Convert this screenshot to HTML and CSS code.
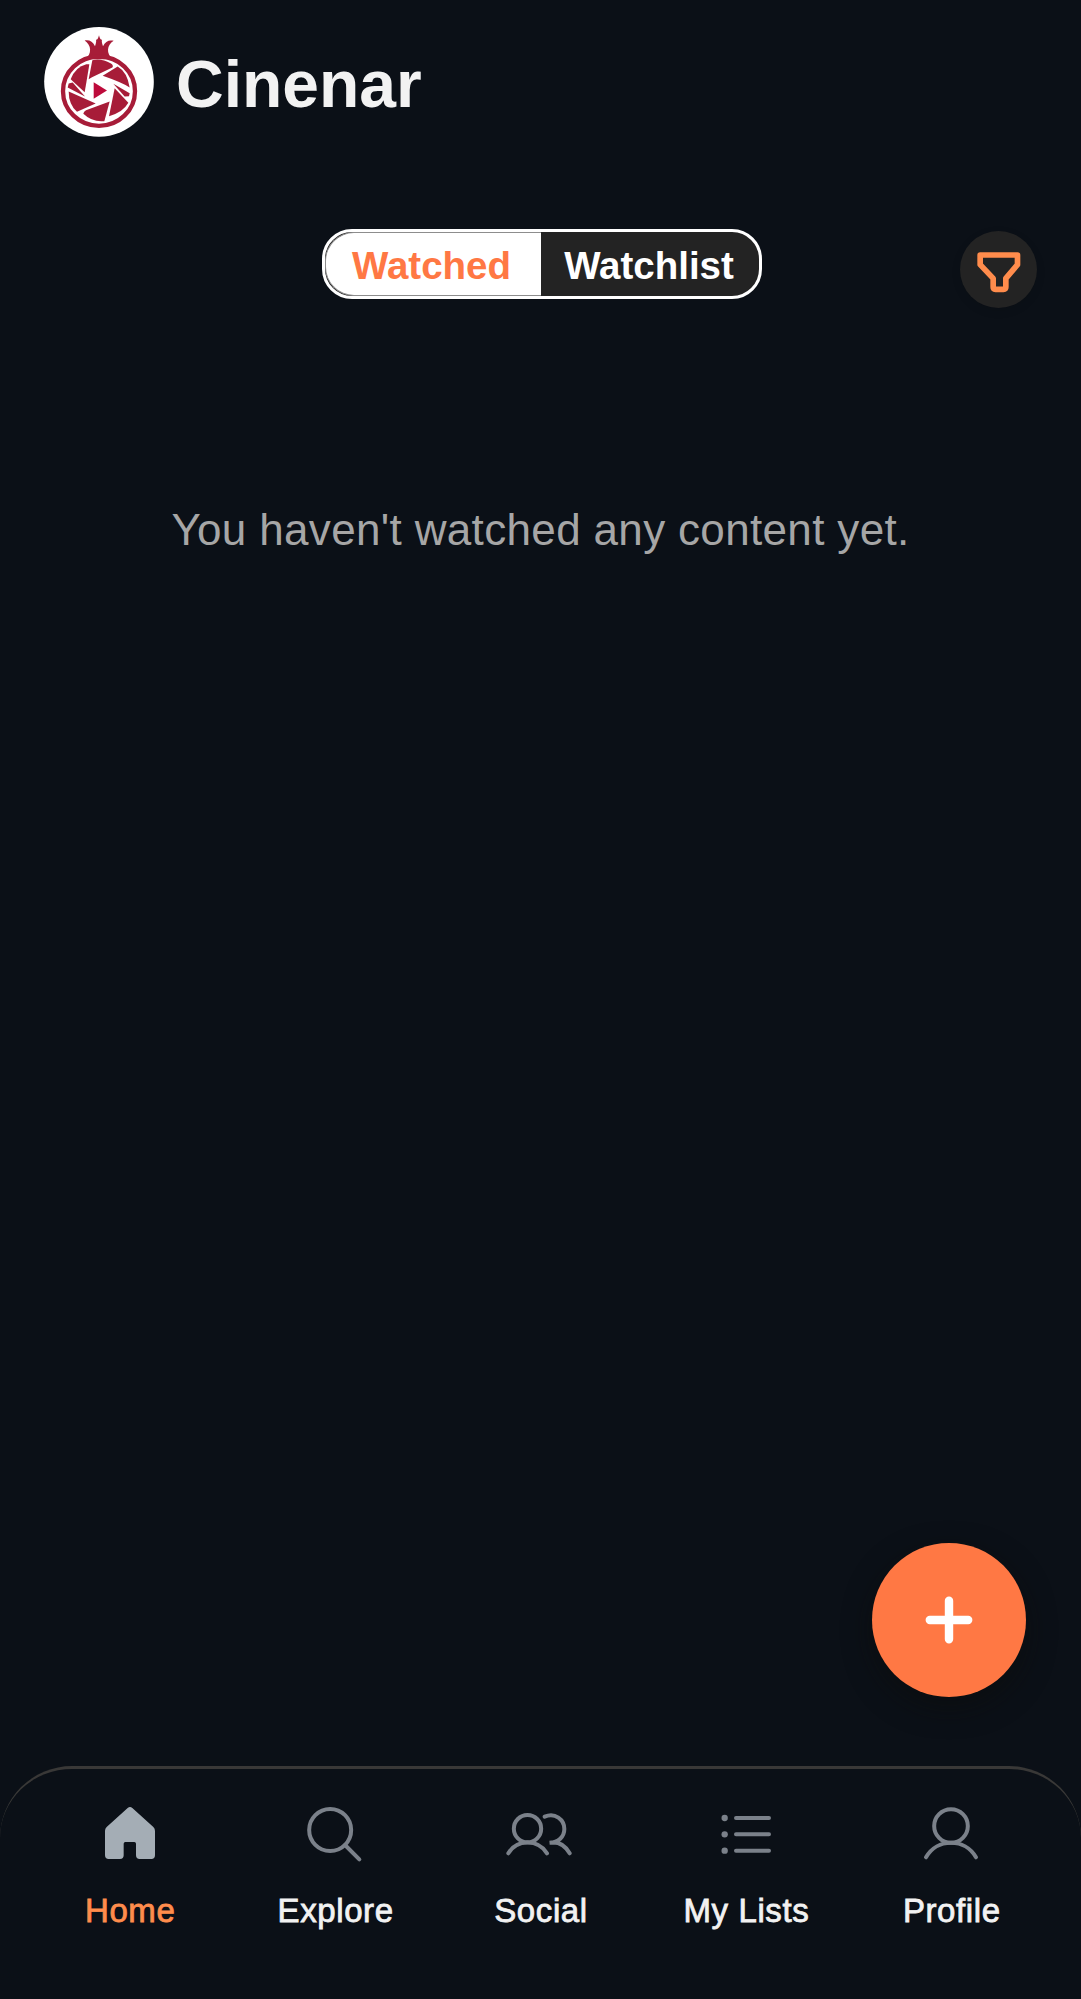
FILE: index.html
```html
<!DOCTYPE html>
<html lang="en">
<head>
<meta charset="utf-8">
<title>Cinenar</title>
<link rel="stylesheet" href="styles.css">
</head>
<body>
<div class="app">
  <header class="header">
    <svg class="logo" viewBox="42 37.5 330 330" aria-hidden="true">
      <circle cx="207" cy="202" r="164.5" fill="#fff"/>
      <g fill="#a71c38">
        <path d="M166 134C186 118 185 92 164 78C177 75 188 80 195 95C199 84 199 80 198 76C203 75 205 70 207 62C209 70 211 75 216 76C215 80 215 84 219 95C226 80 238 75 251 79C230 92 228 118 248 134Z"/>
        <path d="M187 137Q213 130 243 147Q252 154 247 159L186 188L176 194Z"/>
        <path d="M218 184L263 156Q292 173 299 219Q276 204 218 184Z"/>
        <path d="M250 208L299 236L297 245L284 246Z"/>
        <path d="M254 221L295 265Q279 294 237 305Z"/>
        <path d="M239 261L223 320Q187 324 160 298Q161 290 168 287Z"/>
        <path d="M116 231L197 267L141 292Q116 270 116 231Z"/>
        <path d="M113 219L116 207L128 204L165 246Z"/>
        <path d="M178 149Q172 187 164 233L122 194Q136 157 169 149Z"/>
        <path d="M191 203L231 228L191 253Z" fill="#bd0b3b"/>
      </g>
      <ellipse cx="207" cy="230" rx="108" ry="104" fill="none" stroke="#a71c38" stroke-width="13"/>
    </svg>
    <h1 class="brand">Cinenar</h1>
  </header>

  <div class="toolbar">
    <div class="segmented">
      <button class="segment segment-active">Watched</button>
      <button class="segment">Watchlist</button>
    </div>
    <button class="filter" aria-label="Filter">
      <svg viewBox="58.5 48 231 231" aria-hidden="true">
        <path d="M119 120H231V149L196 190V216Q196 223 189 223H165Q158 223 158 216V190L119 149Z" fill="none" stroke="#ff8c4c" stroke-width="17" stroke-linejoin="round"/>
      </svg>
    </button>
  </div>

  <main class="content">
    <p class="empty">You haven't watched any content yet.</p>
  </main>

  <button class="fab" aria-label="Add">
    <svg viewBox="0 0 48 48" aria-hidden="true">
      <path d="M24 4.8V43.2M4.8 24H43.2" stroke="#fff" stroke-width="8.4" stroke-linecap="round"/>
    </svg>
  </button>

  <nav class="tabs">
    <a class="tab tab-active">
      <svg class="tab-icon" viewBox="294 156 192 192" aria-hidden="true">
        <path d="M383 174Q390 168 397 174L460 231Q465 236 465 243V316Q465 327 454 327H419Q408 327 408 316V281Q408 276 403 276H376Q371 276 371 281V316Q371 327 360 327H326Q315 327 315 316V243Q315 236 320 231Z" fill="#a4adb5"/>
      </svg>
      <span class="tab-label">Home</span>
    </a>
    <a class="tab">
      <svg class="tab-icon line" viewBox="909 156 192 192" aria-hidden="true">
        <circle cx="990.5" cy="240" r="63"/>
        <path d="M1035 285L1078 328"/>
      </svg>
      <span class="tab-label">Explore</span>
    </a>
    <a class="tab">
      <svg class="tab-icon tab-icon-wide line" viewBox="132 66 216 192" aria-hidden="true">
        <circle cx="202.5" cy="146" r="41"/>
        <path d="M145 220C171 177 234 177 261 220M254 110C285 97 313 118 313 147C313 170 295 188 269 188C294 184 315 195 329 220"/>
      </svg>
      <span class="tab-label">Social</span>
    </a>
    <a class="tab">
      <svg class="tab-icon line" viewBox="762 66 192 192" aria-hidden="true">
        <path d="M828 114H927M828 163H927M828 212H927"/>
        <g class="dots"><circle cx="794" cy="114" r="9.5"/><circle cx="794" cy="163" r="9.5"/><circle cx="794" cy="212" r="9.5"/></g>
      </svg>
      <span class="tab-label">My Lists</span>
    </a>
    <a class="tab">
      <svg class="tab-icon line" viewBox="357 156 192 192" aria-hidden="true">
        <circle cx="453" cy="228" r="50.5"/>
        <path d="M378 322C411 264 495 264 528 322"/>
      </svg>
      <span class="tab-label">Profile</span>
    </a>
  </nav>
</div>
</body>
</html>
```
FILE: styles.css
```css
* { box-sizing: border-box; }

body {
  margin: 0;
  background: #0b1017;
  font-family: "Liberation Sans", Arial, sans-serif;
}

button {
  border: 0;
  padding: 0;
  font: inherit;
}

svg { display: block; }

.app {
  position: relative;
  display: flex;
  flex-direction: column;
  height: 1999px;
  overflow: hidden;
}

.header {
  display: flex;
  align-items: center;
  gap: 22px;
  height: 110px;
  margin: 27px 44px 0;
}

.logo { width: 110px; height: 110px; }

.brand {
  margin: 4px 0 0;
  font-size: 66px;
  line-height: 76px;
  font-weight: 700;
  color: #f2f2f2;
}

.toolbar {
  display: grid;
  grid-template-columns: 1fr 440px 1fr;
  align-items: start;
  margin: 92px 44px 0 47px;
}

.segmented {
  grid-column: 2;
  display: flex;
  height: 70px;
  border: 3px solid #fff;
  border-radius: 30px;
  background: #232323;
  overflow: hidden;
}

.segment {
  flex: 1;
  background: transparent;
  color: #fff;
  font-size: 38.5px;
  font-weight: 700;
  line-height: 61px;
  padding: 3px 2px 0 0;
}

.segment-active {
  flex: 0 0 216px;
  background: #fff;
  color: #ff7844;
  border: 1px solid #8d8d8d;
  border-right-width: 0;
  border-radius: 29px 0 0 29px;
  padding: 2px 4px 0 0;
}

.filter {
  justify-self: end;
  width: 77px;
  height: 77px;
  margin-top: 2px;
  border-radius: 50%;
  background: #232323;
  box-shadow: 0 3px 10px rgba(0, 0, 0, .1);
}

.content {
  flex: 1;
  padding-top: 196px;
}

.empty {
  margin: 0;
  text-align: center;
  font-size: 44px;
  line-height: 52px;
  letter-spacing: .34px;
  color: #a6a6a6;
}

.fab {
  position: absolute;
  right: 55px;
  bottom: 302px;
  display: grid;
  place-items: center;
  width: 154px;
  height: 154px;
  border-radius: 50%;
  background: #ff7844;
  box-shadow: 0 10px 28px rgba(12, 12, 10, .5);
}

.fab svg { width: 48px; height: 48px; }

.tabs {
  display: grid;
  grid-template-columns: repeat(5, 1fr);
  height: 233px;
  padding: 33px 27px 0;
  border-top: 3px solid #393837;
  border-radius: 72px 72px 0 0;
}

.tab {
  display: flex;
  flex-direction: column;
  align-items: center;
  gap: 26px;
  color: #f2f2f2;
}

.tab-active { color: #ff8c4c; }

.tab-icon { width: 64px; height: 64px; }
.tab-icon-wide { width: 72px; }

.line {
  fill: none;
  stroke: #7b818a;
  stroke-width: 12;
  stroke-linecap: round;
}

.dots { fill: #7b818a; stroke: none; }

.tab-label {
  padding-left: 1px;
  font-size: 33px;
  line-height: 38px;
  white-space: nowrap;
  letter-spacing: .6px;
  -webkit-text-stroke: .8px currentColor;
}
```
